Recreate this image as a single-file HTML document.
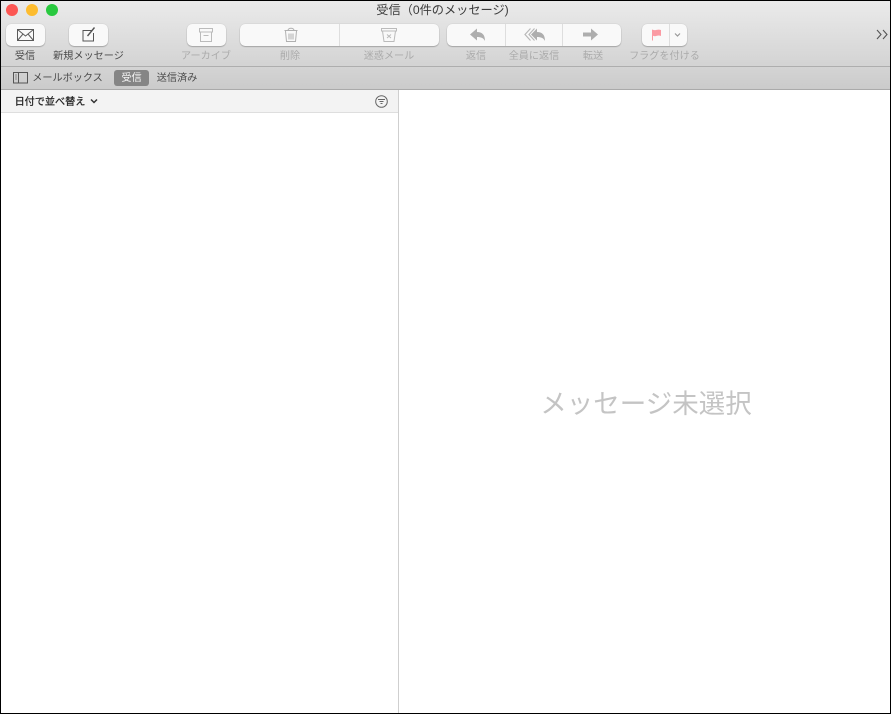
<!DOCTYPE html>
<html lang="ja"><head><meta charset="utf-8"><title>受信</title>
<style>
html,body{margin:0;padding:0;background:#fff}
#w{position:relative;width:891px;height:714px;overflow:hidden;background:#fff;font-family:"Liberation Sans","Noto Sans CJK JP",sans-serif;color:#333}
#w div,#w span,#w svg{position:absolute}
.t{white-space:nowrap;font-size:10.15px;line-height:14px;text-align:center;transform:translateX(-50%);color:#4a4a4a}
.g{color:#aaa}
.b{top:24px;height:22px;background:#f9f9f9;border-radius:5px;box-shadow:0 1px 1px rgba(0,0,0,.22),0 0 1px rgba(0,0,0,.22)}
.s{top:24px;width:1px;height:22px;background:#dedede}
svg{overflow:visible}
</style></head><body><div id="w">
<div style="left:0;top:0;width:891px;height:67px;background:linear-gradient(#ebebeb,#d3d3d3)"></div>
<div style="left:0;top:66px;width:891px;height:1px;background:#aeaeae"></div>
<div style="left:0;top:67px;width:891px;height:22px;background:linear-gradient(#d4d4d4,#cbcbcb)"></div>
<div style="left:0;top:89px;width:891px;height:1px;background:#aaa"></div>
<div style="left:0;top:90px;width:398px;height:22px;background:#f3f3f3"></div>
<div style="left:0;top:112px;width:398px;height:1px;background:#dedede"></div>
<div style="left:398px;top:90px;width:1px;height:624px;background:#cfcfcf"></div>

<div style="left:6px;top:4px;width:12px;height:12px;border-radius:50%;background:#fc5753"></div>
<div style="left:26px;top:4px;width:12px;height:12px;border-radius:50%;background:#fdbc2e"></div>
<div style="left:46px;top:4px;width:12px;height:12px;border-radius:50%;background:#29c93f"></div>
<div class="t" style="left:442.500px;top:3px;font-size:12.200px;line-height:15px;color:#3c3c3c">受信（0件のメッセージ)</div>

<div class="b" style="left:6px;width:39px"></div>
<div class="b" style="left:69px;width:39px"></div>
<div class="b" style="left:187px;width:39px"></div>
<div class="b" style="left:240px;width:199px"></div><div class="s" style="left:339px"></div>
<div class="b" style="left:447px;width:174px"></div><div class="s" style="left:505px"></div><div class="s" style="left:562px"></div>
<div class="b" style="left:642px;width:45px"></div><div class="s" style="left:669px"></div>

<svg style="left:0;top:0" width="891" height="120" fill="none">
<g stroke="#5a5a5a" stroke-width="1"><rect x="17.500" y="29.500" width="16" height="11"/><path d="M17.500 29.500l8 6.500 8-6.500M17.500 40.500l5.500-6.500M33.500 40.500l-5.500-6.500"/></g>
<g stroke="#555"><path d="M92.500 30.500h-9.500v10.500h10.500v-8" stroke-width="1"/><path d="M87.500 36l7-8.500" stroke-width="1.400"/></g>
<g stroke="#bbb"><rect x="199.500" y="28.500" width="13" height="3.500"/><path d="M200.500 32v9.500h11V32M203.500 35.500h5"/></g>
<g stroke="#b0b0b0"><path d="M284.500 30.500h13M288 30.500c0-3 6-3 6 0M285.500 31l1 10.500h9l1-10.500M289 33.500v6M291 33.500v6M293 33.500v6"/></g>
<g stroke="#bbb"><path d="M381.500 28.500h15v2.500h-15zM382.500 31l1.500 10.500h10l1.500-10.500M387 34.500l4 3.500M391 34.500l-4 3.500"/></g>
<path d="M470 34.500l7-6v3.500c5 0 8 2.500 8 9-1.500-3-4-4-8-4v3.500z" fill="#aeaeae"/>
<path d="M531 34.500l6-6v3.500c5 0 8 2.500 8 9-1.500-3-4-4-8-4v3.500z" fill="#aeaeae"/>
<path d="M530.500 28.500l-5.500 6 5.500 6M534.500 28.500l-5.500 6 5.500 6" stroke="#b8b8b8" stroke-width="1.200"/>
<path d="M583 32.500h8v-4l7 6-7 6v-4h-8z" fill="#aeaeae"/>
<path d="M652 29.500c2 .8 3 .8 4.500 .4s3-.4 4.500 .1v6c-1.500-.6-3-.6-4.500-.1s-2.500 .3-3.500-.1v4.700h-1z" fill="#fb9aa3"/>
<path d="M675 33.500l2.500 2.500 2.500-2.500" stroke="#999" stroke-width="1.200"/>
<path d="M877 30l4 4.500-4 4.500M883 30l4 4.500-4 4.500" stroke="#555" stroke-width="1.100"/>
<g stroke="#555"><rect x="13.500" y="72.500" width="14" height="10.500"/><path d="M18.500 72.500v10.500"/><path d="M15 75h2M15 77h2M15 79h2" stroke="#888"/></g>
<path d="M91 99.500l3 3 3-3" stroke="#333" stroke-width="1.500"/>
<g stroke="#666"><circle cx="381.500" cy="101.500" r="5.800"/><path d="M378 99.500h7M379.500 101.500h4M380.500 103.500h2"/></g>
</svg>

<div class="t" style="left:25px;top:49.500px">受信</div>
<div class="t" style="left:88.500px;top:49.500px">新規メッセージ</div>
<div class="t g" style="left:206px;top:49.500px">アーカイブ</div>
<div class="t g" style="left:290px;top:49.500px">削除</div>
<div class="t g" style="left:389px;top:49.500px">迷惑メール</div>
<div class="t g" style="left:476px;top:49.500px">返信</div>
<div class="t g" style="left:534px;top:49.500px">全員に返信</div>
<div class="t g" style="left:593px;top:49.500px">転送</div>
<div class="t g" style="left:664.500px;top:49.500px">フラグを付ける</div>

<div class="t" style="left:67.500px;top:71.500px">メールボックス</div>
<div style="left:114px;top:70px;width:35px;height:16px;border-radius:3px;background:#858585"></div>
<div class="t" style="left:131.500px;top:71.500px;color:#f4f4f4">受信</div>
<div class="t" style="left:177px;top:71.500px">送信済み</div>
<div class="t" style="left:50px;top:95.500px;color:#222;-webkit-text-stroke:.25px #222">日付で並べ替え</div>
<div class="t" style="left:646px;top:387px;font-size:26.500px;line-height:34px;color:#c4c4c4">メッセージ未選択</div>

<div style="left:0;top:0;width:891px;height:1px;background:#000"></div>
<div style="left:0;top:713px;width:891px;height:1px;background:#000"></div>
<div style="left:0;top:0;width:1px;height:714px;background:#000"></div>
<div style="left:890px;top:0;width:1px;height:714px;background:#000"></div>
</div></body></html>
